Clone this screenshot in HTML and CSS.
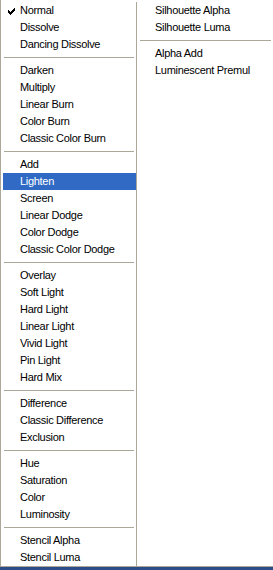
FILE: index.html
```html
<!DOCTYPE html>
<html>
<head>
  <title>Blend Modes</title>
  <meta name="viewport" content="width=device-width, initial-scale=1.0">
  <link rel="stylesheet" href="styles.css">
</head>
<body>
  <div class="menu">
    <ul class="column column-left">
      <li class="item checked">
        <svg class="check" width="7" height="7" viewBox="0 0 7 7">
          <path d="M0 2h1v1h1v1h1v-1h1v-1h1v-1h1v-1h1v3h-1v1h-1v1h-1v1h-1v1h-1v-1h-1v-1h-1z" fill="#000"/>
        </svg>
        Normal
      </li>
      <li class="item">Dissolve</li>
      <li class="item">Dancing Dissolve</li>
      <li class="separator"></li>
      <li class="item">Darken</li>
      <li class="item">Multiply</li>
      <li class="item">Linear Burn</li>
      <li class="item">Color Burn</li>
      <li class="item">Classic Color Burn</li>
      <li class="separator"></li>
      <li class="item">Add</li>
      <li class="item active">Lighten</li>
      <li class="item">Screen</li>
      <li class="item">Linear Dodge</li>
      <li class="item">Color Dodge</li>
      <li class="item">Classic Color Dodge</li>
      <li class="separator"></li>
      <li class="item">Overlay</li>
      <li class="item">Soft Light</li>
      <li class="item">Hard Light</li>
      <li class="item">Linear Light</li>
      <li class="item">Vivid Light</li>
      <li class="item">Pin Light</li>
      <li class="item">Hard Mix</li>
      <li class="separator"></li>
      <li class="item">Difference</li>
      <li class="item">Classic Difference</li>
      <li class="item">Exclusion</li>
      <li class="separator"></li>
      <li class="item">Hue</li>
      <li class="item">Saturation</li>
      <li class="item">Color</li>
      <li class="item">Luminosity</li>
      <li class="separator"></li>
      <li class="item">Stencil Alpha</li>
      <li class="item">Stencil Luma</li>
    </ul>
    <ul class="column column-right">
      <li class="item">Silhouette Alpha</li>
      <li class="item">Silhouette Luma</li>
      <li class="separator"></li>
      <li class="item">Alpha Add</li>
      <li class="item">Luminescent Premul</li>
    </ul>
  </div>
</body>
</html>
```

FILE: styles.css
```css
body {
  margin: 0;
  height: 570px;
  background-color: #2b4c88;
  font-family: Tahoma, 'Liberation Sans', sans-serif;
  font-size: 11px;
  letter-spacing: -0.3px;
  color: #000000;
  overflow: hidden;
}

.menu {
  display: flex;
  background-color: #ffffff;
  border-left: 1px solid #aca899;
  border-bottom: 1px solid #aca899;
  padding-top: 2px;
}

.column {
  list-style: none;
  margin: 0;
  padding: 0;
}

.column-left {
  width: 135px;
}

.column-right {
  flex: 1;
  border-left: 1px solid #aca899;
}

.item {
  position: relative;
  height: 17px;
  line-height: 17px;
  margin-left: 2px;
  padding-left: 17px;
  white-space: nowrap;
}

.column-right .item {
  padding-left: 16px;
}

.item.active {
  background-color: #316ac5;
  color: #ffffff;
}

.check {
  position: absolute;
  left: 5px;
  top: 6px;
}

.separator {
  height: 9px;
  box-sizing: border-box;
  padding-top: 4px;
  margin: 0 2px 0 3px;
}

.separator:after {
  content: "";
  display: block;
  height: 1px;
  background-color: #aca899;
}
```
